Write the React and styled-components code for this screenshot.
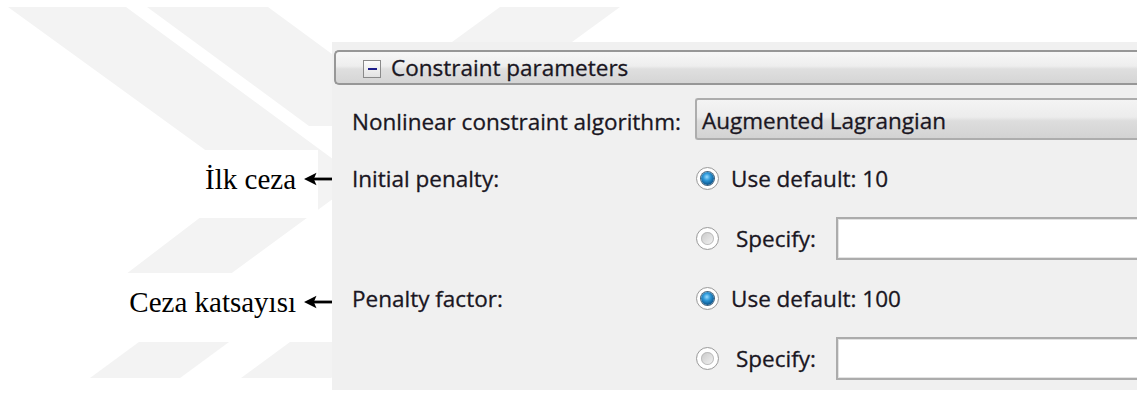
import React from "react";
import styled, { createGlobalStyle } from "styled-components";

const GlobalStyle = createGlobalStyle`
  html, body {
    margin: 0;
    padding: 0;
    background: #ffffff;
  }
  body {
    overflow: hidden;
  }
`;

const Stage = styled.div`
  position: relative;
  z-index: 0;
  display: flex;
  width: 1137px;
  height: 403px;
  overflow: hidden;
  background: #ffffff;
`;

/* faint chevron pattern printed behind the figure */
const Watermark = styled.svg`
  position: absolute;
  inset: 0;
  z-index: -1;
  fill: #f3f3f3;
`;

const Notes = styled.div`
  flex: none;
  width: 332px;
  display: flex;
  flex-direction: column;
  gap: 55px;
  padding-top: 150px;
  box-sizing: border-box;
`;

const Note = styled.div`
  width: 318px;
  height: ${(p) => p.$h}px;
  padding-top: 13px;
  box-sizing: border-box;
  background: #ffffff;
  display: flex;
  justify-content: flex-end;
  align-items: flex-start;
`;

const NoteLine = styled.div`
  display: flex;
  align-items: center;
  height: 32px;
`;

const NoteText = styled.span`
  font-family: "Liberation Serif", "Times New Roman", serif;
  font-size: 29px;
  line-height: 32px;
  color: #000000;
  white-space: nowrap;
`;

const ArrowIcon = styled.svg`
  flex: none;
  display: block;
  margin-left: 8px;
  margin-right: -18px;
`;

const Arrow = () => (
  <ArrowIcon width="32" height="14" viewBox="0 0 32 14" aria-hidden="true">
    <path d="M0 7 L12.5 0.8 L9.8 7 L12.5 13.2 Z" fill="#000" />
    <rect x="9" y="5.6" width="23" height="2.8" fill="#000" />
  </ArrowIcon>
);

const Panel = styled.section`
  flex: 1;
  align-self: flex-start;
  margin-top: 42px;
  height: 348px;
  padding-top: 8px;
  box-sizing: border-box;
  overflow: hidden;
  background: #f0f0f0;
  font-family: "Open Sans", "Noto Sans", sans-serif;
  font-size: 22.5px;
  color: #1a1622;
  -webkit-text-stroke: 0.3px #1a1622;
`;

const SectionHeader = styled.div`
  display: flex;
  align-items: center;
  gap: 10px;
  margin-left: 2px;
  width: calc(100% + 20px);
  height: 35px;
  padding-left: 27px;
  box-sizing: border-box;
  border: 2px solid #979797;
  border-right: none;
  border-radius: 5px 0 0 5px;
  background: linear-gradient(#f7f7f7 0%, #eeeeee 45%, #dfdfdf 55%, #d5d5d5 100%);
  white-space: nowrap;
`;

const CollapseBox = styled.span`
  flex: none;
  width: 18px;
  height: 18px;
  margin-top: 2px;
  box-sizing: border-box;
  border: 1.5px solid #8a8a8a;
  background: linear-gradient(#fdfdfd, #e2e2e2);
  display: flex;
  align-items: center;
  justify-content: center;

  &::after {
    content: "";
    width: 9px;
    height: 2px;
    background: #1f1f8c;
  }
`;

const FormBody = styled.div`
  padding-left: 20px;
`;

const AlgorithmRow = styled.div`
  display: grid;
  grid-template-columns: 343px 1fr;
  align-items: center;
  margin-top: 13px;
  height: 42px;
`;

const FieldLabel = styled.span`
  white-space: nowrap;
  padding-top: ${(p) => p.$shift || 0}px;
`;

const Dropdown = styled.div`
  display: flex;
  align-items: center;
  width: calc(100% + 20px);
  height: 42px;
  padding: 3px 0 0 5px;
  box-sizing: border-box;
  border: 2px solid #adadad;
  border-right: none;
  border-radius: 3px 0 0 3px;
  background: linear-gradient(#f4f4f4 0%, #ececec 45%, #dddddd 55%, #d3d3d3 100%);
  white-space: nowrap;
`;

const ParamGrid = styled.div`
  display: grid;
  grid-template-columns: 344px 1fr;
  grid-auto-rows: 60px;
  align-items: center;
  margin-top: 8px;
`;

const Option = styled.div`
  display: flex;
  align-items: center;
  white-space: nowrap;
`;

const Radio = styled.span`
  flex: none;
  width: 23px;
  height: 23px;
  box-sizing: border-box;
  border-radius: 50%;
  border: 1.5px solid #9c9c9c;
  background: radial-gradient(circle, #ffffff 0 62%, #e4e4e4 100%);
  display: flex;
  align-items: center;
  justify-content: center;

  &::after {
    content: "";
    width: 13px;
    height: 13px;
    border-radius: 50%;
    background: ${(p) =>
      p.$checked
        ? "radial-gradient(circle at 45% 38%, #9adcff 0%, #2f9ada 32%, #0d5a93 70%, #0a3a62 100%)"
        : "linear-gradient(135deg, #c8c8c8, #f4f4f4)"};
    box-shadow: ${(p) =>
      p.$checked ? "0 0 0 1px #47667e" : "inset 0 0 0 1px #bdbdbd"};
  }
`;

const OptionText = styled.span`
  margin-left: ${(p) => p.$gap}px;
`;

const ValueInput = styled.input`
  flex: 1;
  min-width: 0;
  height: 43px;
  margin-left: 20px;
  margin-right: -20px;
  padding: 0;
  box-sizing: border-box;
  border: 2px solid #acacac;
  border-right: none;
  box-shadow: inset 0 0 0 1px #e4e4e4;
  background: #ffffff;
  outline: none;
  appearance: none;
`;

const params = [
  { label: "Initial penalty:", def: "10" },
  { label: "Penalty factor:", def: "100" },
];

const wmShapes = [
  "8,7 126,7 360,179 195,300 92,300 248,181",
  "147,7 268,7 430,126 309,126",
  "500,7 620,7 572,42 452,42",
  "139,342 229,342 180,378 90,378",
  "290,342 380,342 331,378 241,378",
];

export default function App() {
  return (
    <>
      <GlobalStyle />
      <Stage>
        <Watermark width="1137" height="403" viewBox="0 0 1137 403" aria-hidden="true">
          {wmShapes.map((pts) => (
            <polygon key={pts} points={pts} />
          ))}
        </Watermark>

        <Notes>
          <Note $h={68}>
            <NoteLine>
              <NoteText>İlk ceza</NoteText>
              <Arrow />
            </NoteLine>
          </Note>
          <Note $h={69}>
            <NoteLine>
              <NoteText>Ceza katsayısı</NoteText>
              <Arrow />
            </NoteLine>
          </Note>
        </Notes>

        <Panel>
          <SectionHeader>
            <CollapseBox />
            <span>Constraint parameters</span>
          </SectionHeader>

          <FormBody>
            <AlgorithmRow>
              <FieldLabel $shift={4}>Nonlinear constraint algorithm:</FieldLabel>
              <Dropdown>Augmented Lagrangian</Dropdown>
            </AlgorithmRow>

            <ParamGrid>
              {params.map((p) => (
                <React.Fragment key={p.label}>
                  <FieldLabel>{p.label}</FieldLabel>
                  <Option>
                    <Radio $checked />
                    <OptionText $gap={12}>Use default: {p.def}</OptionText>
                  </Option>
                  <span />
                  <Option>
                    <Radio />
                    <OptionText $gap={17}>Specify:</OptionText>
                    <ValueInput type="text" readOnly aria-label={p.label} />
                  </Option>
                </React.Fragment>
              ))}
            </ParamGrid>
          </FormBody>
        </Panel>
      </Stage>
    </>
  );
}
